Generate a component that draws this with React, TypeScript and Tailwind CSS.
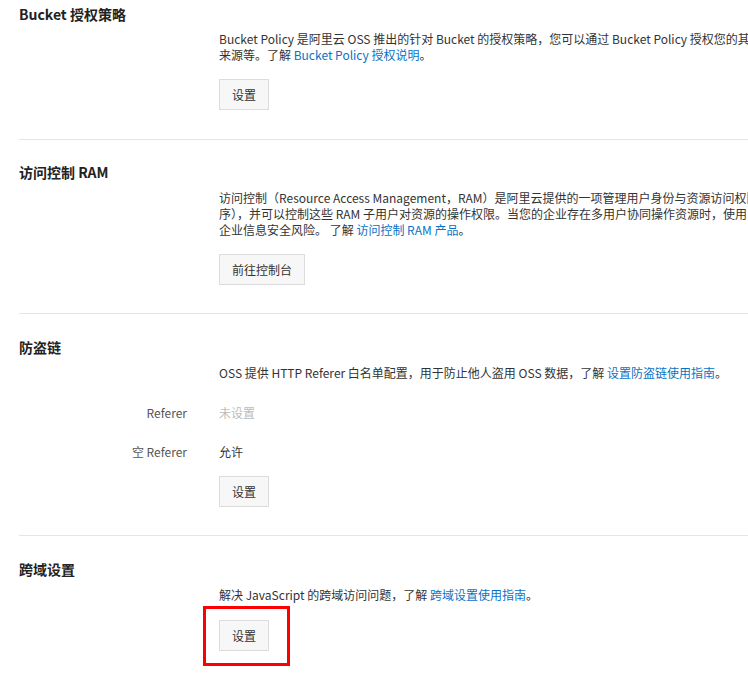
import React from "react";

const Btn = ({ children }: { children: React.ReactNode }) => (
  <button className="h-[31px] px-[12px] bg-[#f7f7f7] border border-[#dcdcdc] text-[12px] text-[#333] leading-none">{children}</button>
);
const A = ({ children }: { children: React.ReactNode }) => <span className="text-[#0a72c4]">{children}</span>;
const Line = ({ children }: { children: React.ReactNode }) => <div className="h-[16px] leading-[16px] whitespace-nowrap">{children}</div>;
const H = ({ children }: { children: React.ReactNode }) => <div className="h-[20px] leading-[20px] text-[14px] font-bold text-[#222]">{children}</div>;

export default function App() {
  return (
    <div className="w-[748px] h-[686px] overflow-hidden bg-white pl-[19px] text-[12px] text-[#333]" style={{ fontFamily: '"Noto Sans CJK SC", "Noto Sans", sans-serif' }}>
      <div className="pt-[4px] pb-[29px] border-b border-[#e5e5e5]">
        <H>Bucket 授权策略</H>
        <div className="pl-[200px] mt-[7px]">
          <Line>Bucket Policy 是阿里云 OSS 推出的针对 Bucket 的授权策略，您可以通过 Bucket Policy 授权您的其他用户访问指定</Line>
          <Line>来源等。了解 <A>Bucket Policy 授权说明</A>。</Line>
          <div className="mt-[16px]"><Btn>设置</Btn></div>
        </div>
      </div>
      <div className="pt-[22px] pb-[28px] border-b border-[#e5e5e5]">
        <H>访问控制 RAM</H>
        <div className="pl-[200px] mt-[8px]">
          <Line>访问控制（Resource Access Management，RAM）是阿里云提供的一项管理用户身份与资源访问权限的服务</Line>
          <Line>序），并可以控制这些 RAM 子用户对资源的操作权限。当您的企业存在多用户协同操作资源时，使用 RAM</Line>
          <Line>企业信息安全风险。 了解 <A>访问控制 RAM 产品</A>。</Line>
          <div className="mt-[16px]"><Btn>前往控制台</Btn></div>
        </div>
      </div>
      <div className="pt-[23px] pb-[28px] border-b border-[#e5e5e5]">
        <H>防盗链</H>
        <div className="pl-[200px] mt-[8px]">
          <Line>OSS 提供 HTTP Referer 白名单配置，用于防止他人盗用 OSS 数据，了解 <A>设置防盗链使用指南</A>。</Line>
        </div>
        <div className="flex mt-[24px] h-[16px] leading-[16px]">
          <div className="w-[168px] text-right text-[#555]">Referer</div>
          <div className="ml-[32px] text-[#bbb]">未设置</div>
        </div>
        <div className="flex mt-[23px] h-[16px] leading-[16px]">
          <div className="w-[168px] text-right text-[#555]">空 Referer</div>
          <div className="ml-[32px]">允许</div>
        </div>
        <div className="pl-[200px] mt-[16px]"><Btn>设置</Btn></div>
      </div>
      <div className="pt-[23px]">
        <H>跨域设置</H>
        <div className="pl-[200px] mt-[8px]">
          <Line>解决 JavaScript 的跨域访问问题，了解 <A>跨域设置使用指南</A>。</Line>
          <div className="mt-[17px] relative w-fit">
            <Btn>设置</Btn>
            <div className="absolute left-[-16px] top-[-14px] w-[87px] h-[60px] border-[3px] border-[#f00]" />
          </div>
        </div>
      </div>
    </div>
  );
}
